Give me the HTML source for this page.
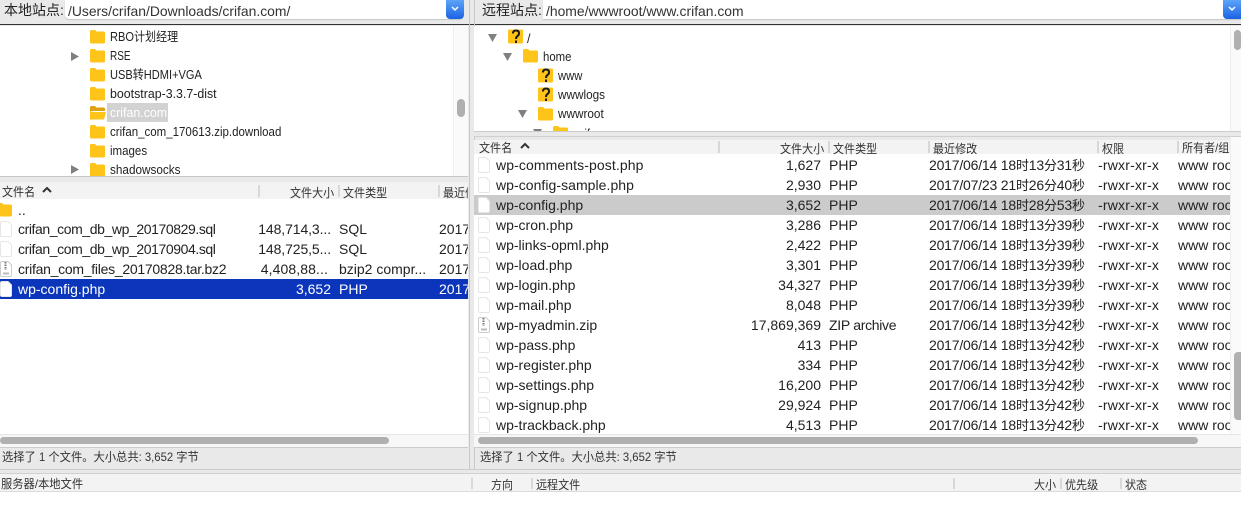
<!DOCTYPE html>
<html>
<head>
<meta charset="utf-8">
<style>
html,body{margin:0;padding:0;width:1241px;height:507px;overflow:hidden;background:#e9e9e9}
body{position:relative;font-family:"Liberation Sans","Noto Sans CJK SC",sans-serif;font-size:14px;color:#222;filter:blur(.35px)}
.a{position:absolute}
.t{position:absolute;white-space:nowrap;line-height:20px;height:20px}
.c{font-size:12px;color:#333;transform-origin:left center;transform:scaleX(.92)}
.s{font-size:12px;color:#333;transform-origin:left center;transform:scaleX(.94)}
.tr{font-size:12.500px;color:#222;transform-origin:left center}
.r{text-align:right}
.m{letter-spacing:-.2px}
.m i{font-style:normal;font-size:13px}
.x{letter-spacing:.2px}
.u{left:1178px;width:52px;overflow:hidden}
svg{position:absolute;overflow:visible}
.h{position:absolute;width:2px;background:#d8d8d8}
</style>
</head>
<body>
<svg width="0" height="0" style="position:absolute">
<defs>
<symbol id="f" viewBox="0 0 15 15"><path d="M0 2.500Q0 1 1.500 1H5L6.500 2.500H13.500Q15 2.500 15 4V13Q15 14.500 13.500 14.500H1.500Q0 14.500 0 13Z" fill="#fec41a"/></symbol>
<symbol id="q" viewBox="0 0 15 15"><path d="M0 2Q0 .5 1.500 .5H13.500Q15 .5 15 2V13Q15 14.500 13.500 14.500H1.500Q0 14.500 0 13Z" fill="#fec41a"/><path d="M5 4.500Q5 1.500 8 1.500Q11 1.500 11 4.200Q11 6 9.500 7Q8 8 8 10M8 11.500V14" fill="none" stroke="#1a1a1a" stroke-width="2"/></symbol>
<symbol id="d" viewBox="0 0 12 16"><path d="M.5 2Q.5 .5 2 .5H8L11.500 4V14Q11.500 15.500 10 15.500H2Q.5 15.500 .5 14Z" fill="#fff" stroke="#e6e6e6"/></symbol>
<symbol id="z" viewBox="0 0 12 16"><path d="M.5 2Q.5 .5 2 .5H8L11.500 4V14Q11.500 15.500 10 15.500H2Q.5 15.500 .5 14Z" fill="#fff" stroke="#ccc"/><path d="M5.500 1V9" stroke="#777" stroke-width="2" stroke-dasharray="1.500 1"/><rect x="3" y="11.500" width="6" height="2" fill="#bbb"/></symbol>
</defs>
</svg>

<!-- top bars -->
<div class="a" style="left:0;top:24px;width:1241px;height:1px;background:#333"></div>
<div class="t" style="left:4px;top:0;font-size:14px;color:#222">本地站点:</div>
<div class="a" style="left:65px;top:0;width:398px;height:19px;background:#fff;border-radius:0 0 4px 4px;box-shadow:0 1px 1px #c4c4c4"></div>
<div class="t" style="left:68px;top:1px;font-size:13.900px;color:#333">/Users/crifan/Downloads/crifan.com/</div>
<div class="a" style="left:446px;top:0;width:18px;height:19px;background:linear-gradient(#5ca4f8,#1c63e4);border-radius:0 0 4px 4px"></div>
<svg style="left:451px;top:6px" width="8" height="6"><path d="M1 1L4 4L7 1" fill="none" stroke="#fff" stroke-width="1.500"/></svg>
<div class="a" style="left:468.500px;top:0;width:1px;height:469px;background:#c9c9c9"></div>
<div class="a" style="left:473.500px;top:0;width:1px;height:469px;background:#c9c9c9"></div>

<div class="t" style="left:482px;top:0;font-size:14px;color:#222">远程站点:</div>
<div class="a" style="left:543px;top:0;width:698px;height:19px;background:#fff;box-shadow:0 1px 1px #c4c4c4"></div>
<div class="t" style="left:546px;top:1px;font-size:13.900px;color:#333">/home/wwwroot/www.crifan.com</div>
<div class="a" style="left:1223px;top:0;width:18px;height:19px;background:linear-gradient(#5ca4f8,#1c63e4);border-radius:0 0 0 4px"></div>
<svg style="left:1228px;top:6px" width="8" height="6"><path d="M1 1L4 4L7 1" fill="none" stroke="#fff" stroke-width="1.500"/></svg>

<!-- left tree -->
<div class="a" style="left:0;top:26px;width:468px;height:150px;background:#fff;overflow:hidden">
<div class="a" style="left:453px;top:0;width:15px;height:150px;background:#fafafa;border-left:1px solid #eee;box-sizing:border-box"></div>
<div class="a" style="left:457px;top:73px;width:8px;height:18px;background:#b0b0b0;border-radius:4px"></div>
<svg style="left:90px;top:3px" width="15" height="15"><use href="#f"/></svg>
<svg style="left:90px;top:22px" width="15" height="15"><use href="#f"/></svg>
<svg style="left:90px;top:41px" width="15" height="15"><use href="#f"/></svg>
<svg style="left:90px;top:60px" width="15" height="15"><use href="#f"/></svg>
<svg style="left:90px;top:79px" width="16" height="15"><path d="M0 2.500Q0 1 1.500 1H5L6.500 2.500H13.500Q15 2.500 15 4V6H0Z" fill="#dfa211"/><path d="M0 6L3 7H16L14 14.500H0Z" fill="#fec41a"/></svg>
<svg style="left:90px;top:98px" width="15" height="15"><use href="#f"/></svg>
<svg style="left:90px;top:117px" width="15" height="15"><use href="#f"/></svg>
<svg style="left:90px;top:136px" width="15" height="15"><use href="#f"/></svg>
<svg style="left:71px;top:26px" width="8" height="9"><path d="M0 0L8 4.500L0 9Z" fill="#808080"/></svg>
<svg style="left:71px;top:139px" width="8" height="9"><path d="M0 0L8 4.500L0 9Z" fill="#808080"/></svg>
<div class="a" style="left:107px;top:77px;width:61px;height:19px;background:#d2d2d2"></div>
<div class="t tr" style="left:110px;top:1px;transform:scaleX(.885)">RBO计划经理</div>
<div class="t tr" style="left:110px;top:20px;transform:scaleX(.8)">RSE</div>
<div class="t tr" style="left:110px;top:39px;transform:scaleX(.885)">USB转HDMI+VGA</div>
<div class="t tr" style="left:110px;top:58px;transform:scaleX(.99)">bootstrap-3.3.7-dist</div>
<div class="t tr" style="left:110px;top:77px;color:#fff;transform:scaleX(.99)">crifan.com</div>
<div class="t tr" style="left:110px;top:96px;transform:scaleX(.92)">crifan_com_170613.zip.download</div>
<div class="t tr" style="left:110px;top:115px;transform:scaleX(.92)">images</div>
<div class="t tr" style="left:110px;top:134px;transform:scaleX(.94)">shadowsocks</div>
</div>

<!-- right tree -->
<div class="a" style="left:474px;top:26px;width:767px;height:105px;background:#fff;overflow:hidden">
<div class="a" style="left:756px;top:0;width:11px;height:105px;background:#fafafa;border-left:1px solid #eee;box-sizing:border-box"></div>
<div class="a" style="left:760px;top:4px;width:7px;height:20px;background:#b0b0b0;border-radius:4px"></div>
<svg style="left:14px;top:8px" width="9" height="8"><path d="M0 0H9L4.500 8Z" fill="#808080"/></svg>
<svg style="left:29px;top:27px" width="9" height="8"><path d="M0 0H9L4.500 8Z" fill="#808080"/></svg>
<svg style="left:44px;top:84px" width="9" height="8"><path d="M0 0H9L4.500 8Z" fill="#808080"/></svg>
<svg style="left:59px;top:103px" width="9" height="8"><path d="M0 0H9L4.500 8Z" fill="#808080"/></svg>
<svg style="left:34px;top:3px" width="15" height="15"><use href="#q"/></svg>
<svg style="left:49px;top:22px" width="15" height="15"><use href="#f"/></svg>
<svg style="left:64px;top:42px" width="15" height="15"><use href="#q"/></svg>
<svg style="left:64px;top:61px" width="15" height="15"><use href="#q"/></svg>
<svg style="left:64px;top:80px" width="15" height="15"><use href="#f"/></svg>
<svg style="left:79px;top:99px" width="15" height="15"><use href="#f"/></svg>
<div class="t tr" style="left:53px;top:3px">/</div>
<div class="t tr" style="left:69px;top:21px;transform:scaleX(.91)">home</div>
<div class="t tr" style="left:84px;top:40px;transform:scaleX(.9)">www</div>
<div class="t tr" style="left:84px;top:59px;transform:scaleX(.94)">wwwlogs</div>
<div class="t tr" style="left:84px;top:78px;transform:scaleX(.94)">wwwroot</div>
<div class="t tr" style="left:101px;top:98px;transform:scaleX(.9)">crifan</div>
</div>
<div class="a" style="left:474px;top:131px;width:767px;height:5px;background:#e9e9e9;border-top:1px solid #ccc;box-sizing:border-box"></div>

<!-- left list -->
<div class="a" style="left:0;top:176px;width:468px;height:1px;background:#c8c8c8"></div>
<div class="a" style="left:0;top:182px;width:468px;height:17px;background:#f3f3f3"></div>
<div class="a" style="left:0;top:199px;width:468px;height:235px;background:#fff"></div>
<div class="t c" style="left:2px;top:182px">文件名</div>
<svg style="left:42px;top:187px" width="10" height="6"><path d="M1 5L5 1L9 5" fill="none" stroke="#333" stroke-width="2"/></svg>
<div class="h" style="left:258px;top:185px;height:12px"></div>
<div class="h" style="left:338px;top:185px;height:12px"></div>
<div class="h" style="left:438px;top:185px;height:12px"></div>
<div class="t c" style="left:290px;top:183px">文件大小</div>
<div class="t c" style="left:343px;top:183px">文件类型</div>
<div class="t c" style="left:443px;top:183px;width:27px;overflow:hidden">最近修改</div>

<svg style="left:-3px;top:202px" width="15" height="15"><use href="#f"/></svg>
<div class="t" style="left:18px;top:200px">..</div>

<div class="a" style="left:0;top:279px;width:468px;height:20px;background:#0b36bc"></div>
<svg style="left:0;top:221px" width="12" height="16"><use href="#d"/></svg>
<svg style="left:0;top:241px" width="12" height="16"><use href="#d"/></svg>
<svg style="left:0;top:261px" width="12" height="16"><use href="#z"/></svg>
<svg style="left:0;top:281px" width="12" height="16"><use href="#d"/></svg>

<div class="t" style="left:18px;top:219px;letter-spacing:-.41px">crifan_com_db_wp_20170829.sql</div>
<div class="t r" style="left:240px;top:219px;width:91px;letter-spacing:-.1px">148,714,3...</div>
<div class="t" style="left:339px;top:219px">SQL</div>
<div class="t" style="left:439px;top:219px;width:29px;overflow:hidden">2017</div>
<div class="t" style="left:18px;top:239px;letter-spacing:-.41px">crifan_com_db_wp_20170904.sql</div>
<div class="t r" style="left:240px;top:239px;width:91px;letter-spacing:-.1px">148,725,5...</div>
<div class="t" style="left:339px;top:239px">SQL</div>
<div class="t" style="left:439px;top:239px;width:29px;overflow:hidden">2017</div>
<div class="t" style="left:18px;top:259px;letter-spacing:-.27px">crifan_com_files_20170828.tar.bz2</div>
<div class="t r" style="left:240px;top:259px;width:88px;letter-spacing:.1px">4,408,88...</div>
<div class="t" style="left:339px;top:259px">bzip2 compr...</div>
<div class="t" style="left:439px;top:259px;width:29px;overflow:hidden">2017</div>
<div class="t" style="left:18px;top:279px;color:#fff">wp-config.php</div>
<div class="t r" style="left:240px;top:279px;width:91px;color:#fff">3,652</div>
<div class="t" style="left:339px;top:279px;color:#fff">PHP</div>
<div class="t" style="left:439px;top:279px;width:29px;overflow:hidden;color:#fff">2017</div>

<div class="a" style="left:0;top:434px;width:468px;height:13px;background:#f7f7f7;border-top:1px solid #e6e6e6;box-sizing:border-box"></div>
<div class="a" style="left:0;top:437px;width:389px;height:7px;background:#b0b0b0;border-radius:4px"></div>
<div class="a" style="left:0;top:447px;width:468px;height:1px;background:#ccc"></div>
<div class="t s" style="left:2px;top:447px">选择了 1 个文件。大小总共: 3,652 字节</div>

<!-- right list -->
<div class="a" style="left:474px;top:140px;width:767px;height:14px;background:#f3f3f3"></div>
<div class="a" style="left:474px;top:154px;width:767px;height:280px;background:#fff"></div>
<div class="a" style="left:474px;top:136px;width:767px;height:1px;background:#d0d0d0"></div>
<div class="t c" style="left:479px;top:138px">文件名</div>
<svg style="left:520px;top:143px" width="10" height="6"><path d="M1 5L5 1L9 5" fill="none" stroke="#333" stroke-width="2"/></svg>
<div class="h" style="left:718px;top:141px;height:12px"></div>
<div class="h" style="left:828px;top:141px;height:12px"></div>
<div class="h" style="left:928px;top:141px;height:12px"></div>
<div class="h" style="left:1097px;top:141px;height:12px"></div>
<div class="h" style="left:1177px;top:141px;height:12px"></div>
<div class="t c" style="left:780px;top:139px">文件大小</div>
<div class="t c" style="left:833px;top:139px">文件类型</div>
<div class="t c" style="left:933px;top:139px">最近修改</div>
<div class="t c" style="left:1102px;top:139px">权限</div>
<div class="t c" style="left:1182px;top:138px;width:52px;overflow:hidden">所有者/组</div>

<div class="a" style="left:474px;top:195px;width:756px;height:20px;background:#cbcbcb"></div>

<svg style="left:478px;top:157px" width="12" height="16"><use href="#d"/></svg>
<svg style="left:478px;top:177px" width="12" height="16"><use href="#d"/></svg>
<svg style="left:478px;top:197px" width="12" height="16"><use href="#d"/></svg>
<svg style="left:478px;top:217px" width="12" height="16"><use href="#d"/></svg>
<svg style="left:478px;top:237px" width="12" height="16"><use href="#d"/></svg>
<svg style="left:478px;top:257px" width="12" height="16"><use href="#d"/></svg>
<svg style="left:478px;top:277px" width="12" height="16"><use href="#d"/></svg>
<svg style="left:478px;top:297px" width="12" height="16"><use href="#d"/></svg>
<svg style="left:478px;top:317px" width="12" height="16"><use href="#z"/></svg>
<svg style="left:478px;top:337px" width="12" height="16"><use href="#d"/></svg>
<svg style="left:478px;top:357px" width="12" height="16"><use href="#d"/></svg>
<svg style="left:478px;top:377px" width="12" height="16"><use href="#d"/></svg>
<svg style="left:478px;top:397px" width="12" height="16"><use href="#d"/></svg>
<svg style="left:478px;top:417px" width="12" height="16"><use href="#d"/></svg>

<div class="t" style="left:496px;top:155px;letter-spacing:.1px">wp-comments-post.php</div>
<div class="t" style="left:496px;top:175px;letter-spacing:.05px">wp-config-sample.php</div>
<div class="t" style="left:496px;top:195px">wp-config.php</div>
<div class="t" style="left:496px;top:215px">wp-cron.php</div>
<div class="t" style="left:496px;top:235px">wp-links-opml.php</div>
<div class="t" style="left:496px;top:255px">wp-load.php</div>
<div class="t" style="left:496px;top:275px">wp-login.php</div>
<div class="t" style="left:496px;top:295px">wp-mail.php</div>
<div class="t" style="left:496px;top:315px">wp-myadmin.zip</div>
<div class="t" style="left:496px;top:335px">wp-pass.php</div>
<div class="t" style="left:496px;top:355px">wp-register.php</div>
<div class="t" style="left:496px;top:375px">wp-settings.php</div>
<div class="t" style="left:496px;top:395px">wp-signup.php</div>
<div class="t" style="left:496px;top:415px">wp-trackback.php</div>

<div class="t r" style="left:720px;top:155px;width:101px">1,627</div>
<div class="t r" style="left:720px;top:175px;width:101px">2,930</div>
<div class="t r" style="left:720px;top:195px;width:101px">3,652</div>
<div class="t r" style="left:720px;top:215px;width:101px">3,286</div>
<div class="t r" style="left:720px;top:235px;width:101px">2,422</div>
<div class="t r" style="left:720px;top:255px;width:101px">3,301</div>
<div class="t r" style="left:720px;top:275px;width:101px">34,327</div>
<div class="t r" style="left:720px;top:295px;width:101px">8,048</div>
<div class="t r" style="left:720px;top:315px;width:101px">17,869,369</div>
<div class="t r" style="left:720px;top:335px;width:101px">413</div>
<div class="t r" style="left:720px;top:355px;width:101px">334</div>
<div class="t r" style="left:720px;top:375px;width:101px">16,200</div>
<div class="t r" style="left:720px;top:395px;width:101px">29,924</div>
<div class="t r" style="left:720px;top:415px;width:101px">4,513</div>

<div class="t" style="left:829px;top:155px">PHP</div>
<div class="t" style="left:829px;top:175px">PHP</div>
<div class="t" style="left:829px;top:195px">PHP</div>
<div class="t" style="left:829px;top:215px">PHP</div>
<div class="t" style="left:829px;top:235px">PHP</div>
<div class="t" style="left:829px;top:255px">PHP</div>
<div class="t" style="left:829px;top:275px">PHP</div>
<div class="t" style="left:829px;top:295px">PHP</div>
<div class="t" style="left:829px;top:315px;letter-spacing:-.3px">ZIP archive</div>
<div class="t" style="left:829px;top:335px">PHP</div>
<div class="t" style="left:829px;top:355px">PHP</div>
<div class="t" style="left:829px;top:375px">PHP</div>
<div class="t" style="left:829px;top:395px">PHP</div>
<div class="t" style="left:829px;top:415px">PHP</div>

<div class="t m" style="left:929px;top:155px">2017/06/14 18<i>时</i>13<i>分</i>31<i>秒</i></div>
<div class="t m" style="left:929px;top:175px">2017/07/23 21<i>时</i>26<i>分</i>40<i>秒</i></div>
<div class="t m" style="left:929px;top:195px">2017/06/14 18<i>时</i>28<i>分</i>53<i>秒</i></div>
<div class="t m" style="left:929px;top:215px">2017/06/14 18<i>时</i>13<i>分</i>39<i>秒</i></div>
<div class="t m" style="left:929px;top:235px">2017/06/14 18<i>时</i>13<i>分</i>39<i>秒</i></div>
<div class="t m" style="left:929px;top:255px">2017/06/14 18<i>时</i>13<i>分</i>39<i>秒</i></div>
<div class="t m" style="left:929px;top:275px">2017/06/14 18<i>时</i>13<i>分</i>39<i>秒</i></div>
<div class="t m" style="left:929px;top:295px">2017/06/14 18<i>时</i>13<i>分</i>39<i>秒</i></div>
<div class="t m" style="left:929px;top:315px">2017/06/14 18<i>时</i>13<i>分</i>42<i>秒</i></div>
<div class="t m" style="left:929px;top:335px">2017/06/14 18<i>时</i>13<i>分</i>42<i>秒</i></div>
<div class="t m" style="left:929px;top:355px">2017/06/14 18<i>时</i>13<i>分</i>42<i>秒</i></div>
<div class="t m" style="left:929px;top:375px">2017/06/14 18<i>时</i>13<i>分</i>42<i>秒</i></div>
<div class="t m" style="left:929px;top:395px">2017/06/14 18<i>时</i>13<i>分</i>42<i>秒</i></div>
<div class="t m" style="left:929px;top:415px">2017/06/14 18<i>时</i>13<i>分</i>42<i>秒</i></div>

<div class="t x" style="left:1098px;top:155px">-rwxr-xr-x</div>
<div class="t x" style="left:1098px;top:175px">-rwxr-xr-x</div>
<div class="t x" style="left:1098px;top:195px">-rwxr-xr-x</div>
<div class="t x" style="left:1098px;top:215px">-rwxr-xr-x</div>
<div class="t x" style="left:1098px;top:235px">-rwxr-xr-x</div>
<div class="t x" style="left:1098px;top:255px">-rwxr-xr-x</div>
<div class="t x" style="left:1098px;top:275px">-rwxr-xr-x</div>
<div class="t x" style="left:1098px;top:295px">-rwxr-xr-x</div>
<div class="t x" style="left:1098px;top:315px">-rwxr-xr-x</div>
<div class="t x" style="left:1098px;top:335px">-rwxr-xr-x</div>
<div class="t x" style="left:1098px;top:355px">-rwxr-xr-x</div>
<div class="t x" style="left:1098px;top:375px">-rwxr-xr-x</div>
<div class="t x" style="left:1098px;top:395px">-rwxr-xr-x</div>
<div class="t x" style="left:1098px;top:415px">-rwxr-xr-x</div>

<div class="t u" style="top:155px">www root</div>
<div class="t u" style="top:175px">www root</div>
<div class="t u" style="top:195px">www root</div>
<div class="t u" style="top:215px">www root</div>
<div class="t u" style="top:235px">www root</div>
<div class="t u" style="top:255px">www root</div>
<div class="t u" style="top:275px">www root</div>
<div class="t u" style="top:295px">www root</div>
<div class="t u" style="top:315px">www root</div>
<div class="t u" style="top:335px">www root</div>
<div class="t u" style="top:355px">www root</div>
<div class="t u" style="top:375px">www root</div>
<div class="t u" style="top:395px">www root</div>
<div class="t u" style="top:415px">www root</div>

<div class="a" style="left:1230px;top:137px;width:11px;height:297px;background:#fafafa;border-left:1px solid #eee;box-sizing:border-box"></div>
<div class="a" style="left:1234px;top:352px;width:7px;height:68px;background:#b0b0b0;border-radius:4px 0 0 4px"></div>

<div class="a" style="left:474px;top:434px;width:767px;height:13px;background:#f7f7f7;border-top:1px solid #e6e6e6;box-sizing:border-box"></div>
<div class="a" style="left:478px;top:437px;width:720px;height:7px;background:#b0b0b0;border-radius:4px"></div>
<div class="a" style="left:474px;top:447px;width:767px;height:1px;background:#ccc"></div>
<div class="t s" style="left:480px;top:447px">选择了 1 个文件。大小总共: 3,652 字节</div>

<!-- queue -->
<div class="a" style="left:0;top:469px;width:1241px;height:1px;background:#ccc"></div>
<div class="a" style="left:0;top:473px;width:1241px;height:1px;background:#d0d0d0"></div>
<div class="a" style="left:0;top:474px;width:1241px;height:17px;background:#f3f3f3;border-bottom:1px solid #dcdcdc"></div>
<div class="a" style="left:0;top:492px;width:1241px;height:15px;background:#fff"></div>
<div class="t s" style="left:1px;top:474px">服务器/本地文件</div>
<div class="h" style="left:471px;top:478px;height:11px"></div>
<div class="h" style="left:531px;top:478px;height:11px"></div>
<div class="h" style="left:953px;top:478px;height:11px"></div>
<div class="h" style="left:1060px;top:478px;height:11px"></div>
<div class="h" style="left:1120px;top:478px;height:11px"></div>
<div class="t c" style="left:491px;top:475px">方向</div>
<div class="t c" style="left:536px;top:475px">远程文件</div>
<div class="t c" style="left:1034px;top:475px">大小</div>
<div class="t c" style="left:1065px;top:475px">优先级</div>
<div class="t c" style="left:1125px;top:475px">状态</div>
</body>
</html>
